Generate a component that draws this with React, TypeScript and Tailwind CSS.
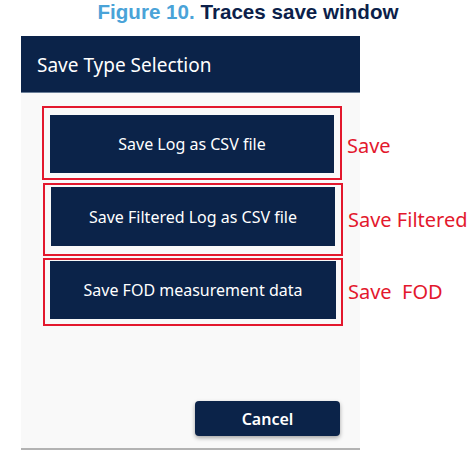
import React from "react";

const ui = { fontFamily: '"Noto Sans", "Open Sans", sans-serif' };

function Row({ label, text, boxClass, btnClass, labelClass }: { label: React.ReactNode; text: string; boxClass: string; btnClass: string; labelClass: string }) {
  return (
    <div className="flex items-center">
      <div className={`border-2 border-[#e3182d] w-[300px] shrink-0 ${boxClass}`}>
        <div className={`bg-[#0b2349] text-white text-[16px] flex items-center justify-center ${btnClass}`}>{text}</div>
      </div>
      <div className={`ml-[5px] whitespace-pre text-[20px] text-[#e3182d] leading-none ${labelClass}`}>{label}</div>
    </div>
  );
}

export default function App() {
  return (
    <div className="w-[472px] h-[457px] bg-white relative overflow-hidden" style={ui}>
      <div
        className="pl-[24px] text-center text-[20.6px] font-bold leading-[24px]"
        style={{ fontFamily: '"Liberation Sans", Arial, sans-serif' }}
      >
        <span className="text-[#4aa3d8]">Figure 10.</span>{" "}
        <span className="text-[#0c1f4a]">Traces save window</span>
      </div>
      <div className="ml-[21px] mt-[12px] w-[339px]">
        <div className="h-[57px] bg-[#0b2349] border-b border-[#6b7f99] flex items-center pl-[16px] pt-[3px] text-white text-[19px]">
          Save Type Selection
        </div>
        <div className="h-[357px] bg-[#f9f9f9] border-b-2 border-[#b3b3b3] flex flex-col pt-[13px] pl-[21px] pb-[12px]">
          <Row label="Save" text="Save Log as CSV file" boxClass="h-[74px] pt-[7px] px-[6px]" btnClass="h-[58px]" labelClass="pt-[5px]" />
          <div className="h-[3px]" />
          <Row label="Save Filtered" text="Save Filtered Log as CSV file" boxClass="h-[73px] pt-[2px] px-[6px] ml-[1px]" btnClass="h-[59px]" labelClass="" />
          <div className="h-[2px]" />
          <Row label="Save  FOD" text="Save FOD measurement data" boxClass="h-[68px] pt-[1px] px-[5px] ml-[1px]" btnClass="h-[58px]" labelClass="" />
          <div className="mt-auto self-end mr-[20px] w-[145px] h-[35px] rounded-[4px] bg-[#0b2349] text-white text-[16px] font-semibold flex items-center justify-center shadow-[0_2px_4px_rgba(0,0,0,0.35)]">
            Cancel
          </div>
        </div>
      </div>
    </div>
  );
}
